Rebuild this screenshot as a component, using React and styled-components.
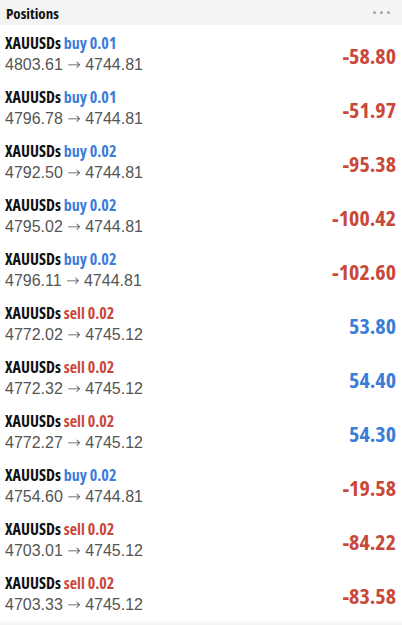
import styled, { createGlobalStyle } from "styled-components";

const GlobalStyle = createGlobalStyle`
  body {
    margin: 0;
    background: #ffffff;
  }
`;

const condensed = `"Open Sans", "DejaVu Sans Condensed", sans-serif`;

const Container = styled.div`
  display: flex;
  flex-direction: column;
  width: 402px;
  height: 625px;
  overflow: hidden;
  background: #ffffff;
`;
const Header = styled.div`
  display: flex;
  flex-direction: row;
  justify-content: space-between;
  align-items: center;
  height: 25px;
  padding: 0 12px 0 6px;
  background-color: #f3f3f3;
  font-family: ${condensed};
  font-stretch: 75%;
  font-size: 15px;
  font-weight: bold;
  color: #111;
`;
const Dots = styled.div`
  display: flex;
  flex-direction: row;
  gap: 4px;
`;
const Dot = styled.span`
  width: 3px;
  height: 3px;
  border-radius: 50%;
  background: #a8a8a8;
`;
const Row = styled.div`
  display: flex;
  flex-direction: row;
  justify-content: space-between;
  align-items: center;
  height: 54px;
  padding: 5px 6px 0 5px;
  box-sizing: border-box;
  flex-shrink: 0;
`;
const Info = styled.div`
  display: flex;
  flex-direction: column;
  gap: 1px;
`;
const Title = styled.div`
  font-family: ${condensed};
  font-stretch: 75%;
  font-size: 16px;
  font-weight: bold;
  line-height: 20px;
  color: #111;
`;
const Side = styled.span`
  color: ${(p) => (p.$type === "buy" ? "#3b7dd8" : "#c8483a")};
`;
const Prices = styled.div`
  font-family: "Liberation Sans", Arial, sans-serif;
  font-size: 16px;
  line-height: 22px;
  color: #555;
`;
const Arrow = styled.span`
  font-family: "DejaVu Sans", sans-serif;
  font-size: 16px;
  font-weight: 200;
`;
const Profit = styled.div`
  font-family: ${condensed};
  font-stretch: 75%;
  font-size: 22px;
  font-weight: bold;
  color: ${(p) => (p.$loss ? "#c8483a" : "#3b7dd8")};
`;
const Fade = styled.div`
  flex: 1;
  background: linear-gradient(#ffffff, #f2f2f2);
`;

const positions = [
  ["buy", "0.01", "4803.61", "4744.81", "-58.80"],
  ["buy", "0.01", "4796.78", "4744.81", "-51.97"],
  ["buy", "0.02", "4792.50", "4744.81", "-95.38"],
  ["buy", "0.02", "4795.02", "4744.81", "-100.42"],
  ["buy", "0.02", "4796.11", "4744.81", "-102.60"],
  ["sell", "0.02", "4772.02", "4745.12", "53.80"],
  ["sell", "0.02", "4772.32", "4745.12", "54.40"],
  ["sell", "0.02", "4772.27", "4745.12", "54.30"],
  ["buy", "0.02", "4754.60", "4744.81", "-19.58"],
  ["sell", "0.02", "4703.01", "4745.12", "-84.22"],
  ["sell", "0.02", "4703.33", "4745.12", "-83.58"],
];

const App = () => {
  return (
    <Container>
      <GlobalStyle />
      <Header>
        Positions
        <Dots>
          <Dot />
          <Dot />
          <Dot />
        </Dots>
      </Header>
      {positions.map(([type, vol, open, cur, profit], i) => (
        <Row key={i}>
          <Info>
            <Title>
              XAUUSDs{" "}
              <Side $type={type}>
                {type} {vol}
              </Side>
            </Title>
            <Prices>
              {open} <Arrow>→</Arrow> {cur}
            </Prices>
          </Info>
          <Profit $loss={profit.startsWith("-")}>{profit}</Profit>
        </Row>
      ))}
      <Fade />
    </Container>
  );
};
export default App;
